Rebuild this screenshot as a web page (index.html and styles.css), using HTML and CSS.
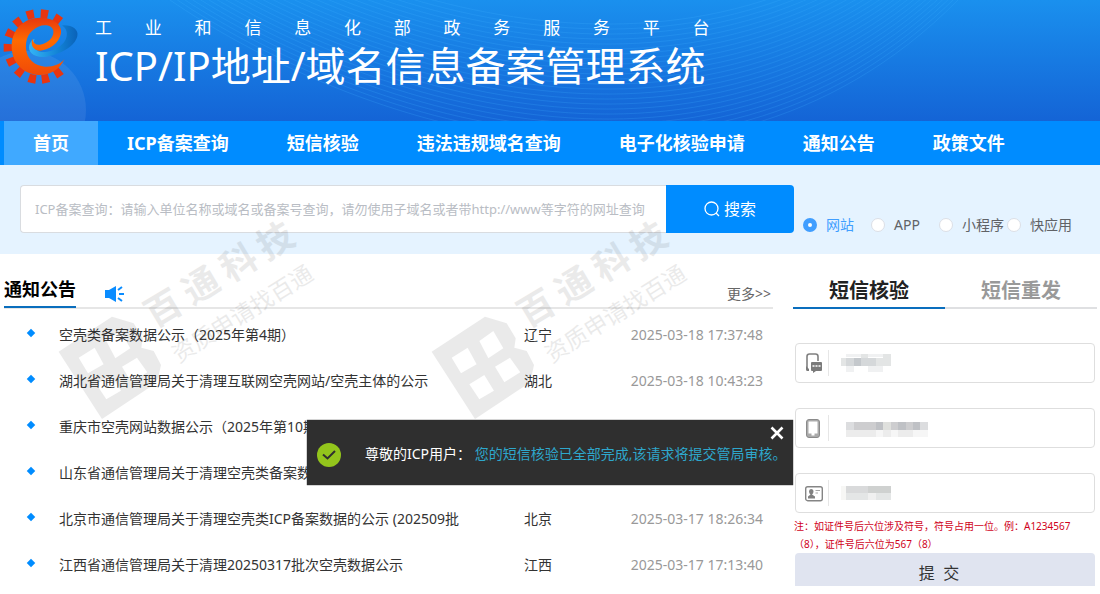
FILE: index.html
```html
<!DOCTYPE html>
<html lang="zh-CN">
<head>
<meta charset="utf-8">
<meta name="viewport" content="width=device-width, initial-scale=1">
<title>ICP/IP地址/域名信息备案管理系统</title>
<link rel="stylesheet" href="styles.css">
</head>
<body>
<header class="banner">
  <svg class="banner-art" viewBox="0 0 1100 121" preserveAspectRatio="xMidYMin slice" aria-hidden="true">
    <defs>
      <path id="wave" d="M170 0C330 110 700 260 958 0"/>
      <g id="waves">
        <use href="#wave"/><use href="#wave" y="-5"/><use href="#wave" y="-10"/><use href="#wave" y="-15"/><use href="#wave" y="-20"/>
      </g>
    </defs>
    <circle cx="27" cy="110" r="59" fill="#fff" opacity=".08"/>
    <g fill="none" stroke="#3fb0ff" stroke-opacity=".22">
      <use href="#waves"/><use href="#waves" y="-25"/><use href="#waves" y="-50"/><use href="#waves" y="-75"/><use href="#waves" y="-100"/>
    </g>
  </svg>
  <svg class="logo" viewBox="0 0 240 270" role="img" aria-label="logo">
    <defs>
      <linearGradient id="orange" x1="0" y1="0" x2="0" y2="1"><stop offset="0" stop-color="#e8380d"/><stop offset=".4" stop-color="#ff6a00"/><stop offset="1" stop-color="#f04a08"/></linearGradient>
      <linearGradient id="blue" x1="0" y1="0" x2="1" y2="0"><stop offset="0" stop-color="#35b4f5"/><stop offset=".6" stop-color="#1283d6"/><stop offset="1" stop-color="#0a62b8"/></linearGradient>
      <path id="tooth" d="M-12 -13L12 -13L10 13L-10 13Z"/>
    </defs>
    <path fill="url(#blue)" d="M186 76C214 73 237 88 232 108C225 140 182 162 140 170C105 175 82 158 88 135C90 126 98 118 104 116C96 135 102 152 125 156C160 158 196 135 200 108C202 95 198 85 186 76Z"/>
    <g fill="#e8350f">
      <use href="#tooth" transform="translate(133 42) rotate(8)"/>
      <use href="#tooth" transform="translate(172 58) rotate(35)"/>
      <use href="#tooth" transform="translate(91 44) rotate(-14)"/>
      <use href="#tooth" transform="translate(54 67) rotate(-38)"/>
      <use href="#tooth" transform="translate(31 101) rotate(-65)"/>
      <use href="#tooth" transform="translate(24 143) rotate(-90)"/>
      <use href="#tooth" transform="translate(34 184) rotate(-114)"/>
      <use href="#tooth" transform="translate(59 216) rotate(-140)"/>
      <use href="#tooth" transform="translate(97 236) rotate(-167)"/>
      <use href="#tooth" transform="translate(136 236) rotate(168)"/>
      <use href="#tooth" transform="translate(174 218) rotate(145)"/>
    </g>
    <path fill="url(#orange)" d="M193 178C180 210 145 227 115 225C68 222 33 185 35 135C37 85 75 51 125 53C165 55 186 75 183 100C178 130 145 152 118 152C100 150 91 135 97 116C100 130 108 136 120 134C145 130 163 110 160 92C156 76 135 72 115 80C88 92 76 115 78 145C80 178 105 198 135 200C160 201 180 194 193 178Z"/>
  </svg>
  <div class="brand">
    <p class="ministry">工 业 和 信 息 化 部 政 务 服 务 平 台</p>
    <h1 class="system">ICP/IP地址/域名信息备案管理系统</h1>
  </div>
</header>

<nav class="nav">
  <a class="nav-link active" href="#">首页</a>
  <a class="nav-link" href="#">ICP备案查询</a>
  <a class="nav-link" href="#">短信核验</a>
  <a class="nav-link" href="#">违法违规域名查询</a>
  <a class="nav-link" href="#">电子化核验申请</a>
  <a class="nav-link" href="#">通知公告</a>
  <a class="nav-link" href="#">政策文件</a>
</nav>

<form class="search">
  <div class="search-box">
    <input class="search-input" type="text" aria-label="ICP备案查询" placeholder="ICP备案查询：请输入单位名称或域名或备案号查询，请勿使用子域名或者带http://www等字符的网址查询">
    <button class="search-button" type="button">
      <svg width="16" height="16" viewBox="0 0 16 16" fill="none" stroke="#fff" stroke-width="1.3" aria-hidden="true"><circle cx="7.5" cy="7.5" r="6.5"/><path d="M12 12L15 15"/></svg>
      搜索
    </button>
  </div>
  <div class="kinds">
    <label class="kind"><input type="radio" name="kind" checked><span>网站</span></label>
    <label class="kind"><input type="radio" name="kind"><span>APP</span></label>
    <label class="kind"><input type="radio" name="kind"><span>小程序</span></label>
    <label class="kind"><input type="radio" name="kind"><span>快应用</span></label>
  </div>
</form>

<main class="main">
  <section class="notices">
    <div class="notices-head">
      <h2 class="notices-title">通知公告</h2>
      <svg class="horn" width="20" height="18" viewBox="0 0 20 18" aria-hidden="true"><path fill="#0a8cff" d="M0 5H4L11 1V17L4 13H0Z"/><path d="M13 5L17 2M14 9H19M13 13L17 16" stroke="#0a8cff" stroke-width="2" fill="none"/></svg>
      <a class="more" href="#">更多&gt;&gt;</a>
    </div>
    <table class="list">
      <tbody>
        <tr><td class="title"><a href="#">空壳类备案数据公示（2025年第4期）</a></td><td class="area">辽宁</td><td class="time">2025-03-18 17:37:48</td></tr>
        <tr><td class="title"><a href="#">湖北省通信管理局关于清理互联网空壳网站/空壳主体的公示</a></td><td class="area">湖北</td><td class="time">2025-03-18 10:43:23</td></tr>
        <tr><td class="title"><a href="#">重庆市空壳网站数据公示（2025年第10期</a></td><td class="area"></td><td class="time"></td></tr>
        <tr><td class="title"><a href="#">山东省通信管理局关于清理空壳类备案数</a></td><td class="area"></td><td class="time"></td></tr>
        <tr><td class="title"><a href="#">北京市通信管理局关于清理空壳类ICP备案数据的公示 (202509批</a></td><td class="area">北京</td><td class="time">2025-03-17 18:26:34</td></tr>
        <tr><td class="title"><a href="#">江西省通信管理局关于清理20250317批次空壳数据公示</a></td><td class="area">江西</td><td class="time">2025-03-17 17:13:40</td></tr>
      </tbody>
    </table>
  </section>

  <section class="verify">
    <div class="tabs">
      <button class="tab selected" type="button">短信核验</button>
      <button class="tab" type="button">短信重发</button>
    </div>
    <form class="verify-form">
      <label class="field">
        <svg class="field-icon" viewBox="0 0 18 22" aria-hidden="true"><path d="M2 17V4.500Q2 2 4.500 2H10.500Q13 2 13 4.500V9" fill="none" stroke="#808080" stroke-width="1.600"/><path fill="#7a7a7a" d="M1 14L4 17V19H2.500Q1 19 1 17.500ZM7 10H16Q17 10 17 11V18Q17 19 16 19H11L8 21V19H7Q6 19 6 18V11Q6 10 7 10Z"/><path d="M7.500 14H15.500" stroke="#fff" stroke-width="1.400" stroke-dasharray="2 1"/></svg>
        <svg class="mosaic" viewBox="0 0 112 28" shape-rendering="crispEdges" aria-hidden="true">
          <path fill="#f0f1f2" d="M6 4h16v4H6zM30 4h16v4H30zM30 16h16v8H30zM6 16h8v8H6z"/><path fill="#e3e5e5" d="M0 9h6v8H0zM22 4h8v5H22zM46 4h8v5H46zM38 9h16v8H38z"/><path fill="#d5d8da" d="M6 9h8v8H6zM22 9h16v8H22z"/><path fill="#c4c8cc" d="M14 9h8v8H14z"/>
        </svg>
        <input class="field-input" type="text" aria-label="姓名">
      </label>
      <label class="field">
        <svg class="field-icon" viewBox="0 0 18 22" aria-hidden="true"><rect x="1.500" y="2.500" width="13" height="18" rx="2.500" fill="#aaa" stroke="#8a8a8a"/><path fill="#fff" d="M3.500 4.500H12.500V16.500H9.500V18.500H6.500V16.500H3.500Z"/></svg>
        <svg class="mosaic" viewBox="0 0 112 28" shape-rendering="crispEdges" aria-hidden="true">
          <path fill="#dcdddf" d="M6 8h8v8H6zM86 8h8v8H86z"/><path fill="#cdcdcf" d="M14 8h56v8H14zM70 8h8v8H70z"/><path fill="#bfc1c5" d="M38 8h8v8H38zM62 8h8v8H62zM78 8h8v8H78z"/><path fill="#dfe0dd" d="M46 8h8v8H46z"/><path fill="#ececec" d="M6 16h32v8H6zM46 16h8v8H46zM62 16h16v8H62z"/><path fill="#f6f6f6" d="M38 16h8v8H38zM54 16h8v8H54zM78 16h16v8H78z"/>
        </svg>
        <input class="field-input" type="text" aria-label="手机号">
      </label>
      <label class="field">
        <svg class="field-icon" viewBox="0 0 18 22" aria-hidden="true"><rect x="0.700" y="4.700" width="16.600" height="14" rx="2" fill="#fff" stroke="#858585" stroke-width="1.400"/><path fill="#808080" d="M6 7Q8.500 7 8.500 9.500Q8.500 11.500 7 12.500L10 14.500V16.500H3V14.500L5.500 12.500Q4 11.500 4 9.500Q4 7 6 7Z"/><path d="M10.500 8.500H15M10.500 11H13" stroke="#a5a5a5"/></svg>
        <svg class="mosaic" viewBox="0 0 112 28" shape-rendering="crispEdges" aria-hidden="true">
          <path fill="#f7f7f5" d="M0 6h6v16H0z"/><path fill="#d9dadb" d="M6 6h24v8H6z"/><path fill="#cfd1d0" d="M30 6h24v8H30z"/><path fill="#e4e6e6" d="M6 14h24v8H6zM38 14h16v8H38z"/><path fill="#f0f0f0" d="M30 14h8v8H30z"/>
        </svg>
        <input class="field-input" type="text" aria-label="证件号后六位">
      </label>
      <p class="note">注：如证件号后六位涉及符号，符号占用一位。例：A1234567（8），证件号后六位为567（8）</p>
      <button class="submit" type="button">提&nbsp; 交</button>
    </form>
  </section>

  <div class="toast" role="alert">
    <svg class="toast-icon" width="24" height="24" viewBox="0 0 24 24" aria-hidden="true"><circle cx="12" cy="12" r="12" fill="#93c51c"/><path d="M6 11.500L10.500 15.500L18 8" fill="none" stroke="#2f2f2f" stroke-width="2"/></svg>
    <p class="toast-text">尊敬的ICP用户： <span class="toast-link">您的短信核验已全部完成,该请求将提交管局审核。</span></p>
    <button class="toast-close" type="button" aria-label="关闭"><svg width="14" height="14" viewBox="0 0 14 14" aria-hidden="true"><path d="M1.500 1.500L12.500 12.500M12.500 1.500L1.500 12.500" stroke="#fff" stroke-width="2.600"/></svg></button>
  </div>

  <svg class="watermark first" viewBox="50 210 280 215" aria-hidden="true">
    <g id="mark">
      <path fill-rule="evenodd" transform="translate(52 215) scale(.3333)" d="M20 410L180 305L245 325L272 370L268 398L305 408L327 450L318 490L300 512L150 612ZM80 428L108 475L155 448L128 398ZM163 378L190 430L235 400L205 348ZM133 508L163 553L207 527L178 480ZM210 455L238 502L286 472L255 428Z"/>
      <g transform="translate(163 308) rotate(-31)"><text class="mark-name" x="-18 26 70 113" y="13">百通科技</text></g>
      <g transform="translate(183 350) rotate(-32)"><text class="mark-slogan" x="-11" y="9">资质申请找百通</text></g>
    </g>
  </svg>
  <svg class="watermark second" viewBox="50 210 280 215" aria-hidden="true"><use href="#mark"/></svg>
</main>
</body>
</html>
```
FILE: styles.css
```css
* { box-sizing: border-box; }

body {
  margin: 0;
  background: #fff;
  color: #333;
  font: 14px/20px "Noto Sans", "Noto Sans CJK SC", sans-serif;
}

h1, h2, p { margin: 0; }
a { color: inherit; text-decoration: none; }
button, input { font: inherit; color: inherit; }
button { border: 0; padding: 0; background: none; cursor: pointer; }

.banner {
  position: relative;
  display: flex;
  gap: 15px;
  height: 121px;
  overflow: hidden;
  background: linear-gradient(#1a90ee, #1464d6);
  color: #fff;
}
.banner-art {
  position: absolute;
  inset: 0;
  width: 100%;
  height: 100%;
}
.logo { position: relative; flex: none; width: 80px; height: 90px; }
.brand { position: relative; padding-top: 16px; }
.ministry {
  margin-right: -4px;
  font-size: 17px;
  line-height: 24px;
  text-align-last: justify;
}
.system {
  font-size: 40px;
  font-weight: 400;
  line-height: 52px;
  white-space: nowrap;
}

.nav {
  display: flex;
  padding-left: 4px;
  background: #008cff;
  color: #fff;
}
.nav-link {
  padding: 0 29px;
  font-size: 18px;
  font-weight: 700;
  line-height: 44px;
  white-space: nowrap;
}
.nav-link.active { background: #40a9ff; }

.search {
  display: flex;
  gap: 9px;
  padding: 20px 20px 21px;
  background: #e5f3ff;
}
.search-box { display: flex; flex: 1; }
.search-input {
  flex: 1;
  min-width: 0;
  height: 48px;
  padding: 0 14px;
  border: 1px solid #d9dce0;
  border-right: 0;
  border-radius: 4px 0 0 4px;
  background: #fff;
  font-size: 13px;
}
.search-input::placeholder { color: #b9bdc4; opacity: 1; }
.search-button {
  display: flex;
  align-items: center;
  justify-content: center;
  gap: 4px;
  width: 128px;
  border-radius: 0 4px 4px 0;
  background: #008cff;
  color: #fff;
  font-size: 16px;
}
.kinds {
  display: grid;
  grid-template-columns: repeat(4, 68px);
  align-items: end;
  margin-right: 5px;
  color: #606266;
}
.kind {
  display: flex;
  align-items: center;
  gap: 9px;
  height: 16px;
  white-space: nowrap;
}
.kind input {
  flex: none;
  appearance: none;
  width: 14px;
  height: 14px;
  margin: 0;
  border: 1px solid #dcdfe6;
  border-radius: 50%;
  background: #fff;
}
.kind input:checked { border: 5px solid #409eff; }
.kind input:checked + span { color: #409eff; }

.main {
  position: relative;
  display: flex;
  gap: 20px;
  padding: 20px 3px 0 4px;
}
.notices { flex: 1; min-width: 0; }
.notices-head {
  display: flex;
  align-items: center;
  height: 35px;
  margin-bottom: 3px;
  border-bottom: 2px solid #e6e6e6;
}
.notices-title {
  height: 35px;
  border-bottom: 2px solid #0a6ebd;
  color: #000;
  font-size: 18px;
  font-weight: 700;
  line-height: 32px;
}
.horn { margin: 6px 0 0 29px; }
.more { margin: 6px 2px 0 auto; color: #666; }

.list { width: 100%; border-collapse: collapse; table-layout: fixed; }
.list td { height: 46px; padding: 0; white-space: nowrap; }
.title { width: 520px; }
.title a { display: flex; align-items: center; }
.title a::before {
  content: "";
  width: 6px;
  height: 6px;
  margin: 0 25px 4px 24px;
  background: #008cff;
  transform: rotate(45deg);
}
.area { width: 100px; }
.list .time { padding-right: 10px; color: #999; text-align: right; }

.verify { width: 304px; }
.tabs { display: flex; }
.tab {
  flex: 1;
  height: 35px;
  border-bottom: 2px solid #dfe0e2;
  color: #999;
  font-size: 20px;
  font-weight: 700;
  line-height: 30px;
}
.tab.selected { border-color: #0a6ebd; color: #222; }
.verify-form { padding: 34px 2px 0; }
.field {
  display: flex;
  align-items: center;
  height: 40px;
  margin-bottom: 25px;
  padding-left: 9px;
  border: 1px solid #dedede;
  border-radius: 4px;
}
.field-icon { flex: none; width: 18px; height: 22px; }
.mosaic {
  flex: none;
  width: 120px;
  height: 26px;
  margin-left: 5px;
  padding-left: 8px;
  border-left: 1px solid #e6e6e6;
}
.field-input {
  flex: 1;
  min-width: 0;
  height: 36px;
  border: 0;
  outline: 0;
  background: none;
}
.note {
  margin: -21px -1px 0;
  color: #d0021b;
  font-size: 10px;
  line-height: 18px;
}
.submit {
  display: block;
  width: 100%;
  padding: 8px 12px 1px 0;
  border-radius: 4px 4px 0 0;
  background: #e0e4f0;
  color: #333;
  font-size: 16px;
  line-height: 24px;
}

.toast {
  position: absolute;
  top: 166px;
  right: 307px;
  z-index: 2;
  display: flex;
  align-items: center;
  width: 486px;
  height: 65px;
  padding-left: 10px;
  background: #2f2f2f;
  color: #fff;
  box-shadow: 0 0 1px #000;
}
.toast-icon { margin-top: 4px; }
.toast-text { margin: 2px 0 0 24px; white-space: nowrap; }
.toast-link { color: #2ea7cc; }
.toast-close {
  position: absolute;
  top: 6px;
  right: 9px;
  width: 14px;
  height: 14px;
  line-height: 0;
}

.watermark {
  position: absolute;
  top: -44px;
  width: 280px;
  height: 215px;
  overflow: visible;
  opacity: .08;
  pointer-events: none;
}
.watermark.first { left: 50px; }
.watermark.second { left: 423px; }
.mark-name { font-size: 36px; font-weight: 700; }
.mark-slogan { font-size: 23px; }
```
